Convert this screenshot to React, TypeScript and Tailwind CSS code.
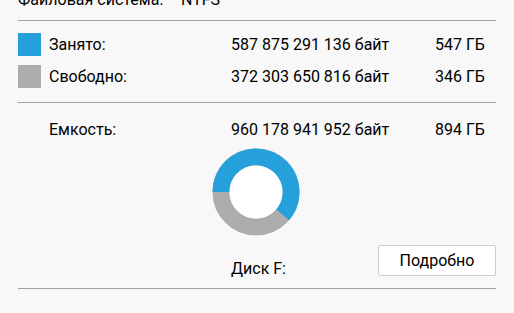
import React from 'react';

const used = 587875291136;
const total = 960178941952;

const Donut: React.FC = () => {
  const cx = 44;
  const cy = 44;
  const r = 35;
  const frac = used / total;
  const start = Math.PI; // 9 o'clock
  const end = start + frac * Math.PI * 2;
  const p = (a: number) => [cx + r * Math.cos(a), cy + r * Math.sin(a)];
  const [x1, y1] = p(start);
  const [x2, y2] = p(end);
  const large = frac > 0.5 ? 1 : 0;
  return (
    <svg width="88" height="88" viewBox="0 0 88 88">
      <circle cx={cx} cy={cy} r={r} fill="none" stroke="#adadad" strokeWidth="17" />
      <path
        d={`M ${x1} ${y1} A ${r} ${r} 0 ${large} 1 ${x2} ${y2}`}
        fill="none"
        stroke="#26a0da"
        strokeWidth="17"
      />
      <circle cx={cx} cy={cy} r="26.5" fill="#ffffff" />
    </svg>
  );
};

const App: React.FC = () => {
  return (
    <div
      className="w-[514px] h-[313px] overflow-hidden bg-[#f8f8f8] text-[16px] text-black px-[18px]"
      style={{ fontFamily: 'Roboto, "Noto Sans", sans-serif' }}
    >
      {/* File system line, cut off at the top */}
      <div className="flex h-[20px] -mt-[10px] leading-[20px]">
        <span className="w-[163px]">Файловая система:</span>
        <span>NTFS</span>
      </div>
      <div className="h-px bg-[#a0a0a0] mt-[10px]" />

      {/* Used / free */}
      <div className="grid grid-cols-[31px_182px_204px_1fr] gap-y-[9px] mt-[12px] items-center leading-[23px]">
        <div className="w-[23px] h-[23px] bg-[#26a0da]" />
        <span>Занято:</span>
        <span>587 875 291 136 байт</span>
        <span>547 ГБ</span>
        <div className="w-[23px] h-[23px] bg-[#adadad]" />
        <span>Свободно:</span>
        <span>372 303 650 816 байт</span>
        <span>346 ГБ</span>
      </div>
      <div className="h-px bg-[#a0a0a0] mt-[14px]" />

      {/* Capacity */}
      <div className="grid grid-cols-[31px_182px_204px_1fr] mt-[15px] leading-[23px]">
        <span />
        <span>Емкость:</span>
        <span>960 178 941 952 байт</span>
        <span>894 ГБ</span>
      </div>

      {/* Chart */}
      <div className="flex justify-center mt-[7px] pr-[2px]">
        <Donut />
      </div>

      {/* Footer */}
      <div className="grid grid-cols-[1fr_auto_1fr] items-start mt-[9px]">
        <span />
        <span className="mt-[14px] leading-[20px] pl-[3px]">Диск F:</span>
        <div className="flex justify-end">
          <button className="w-[118px] h-[31px] bg-white border border-[#cccccc] rounded-[2px] text-[16px] leading-none">
            Подробно
          </button>
        </div>
      </div>
      <div className="h-px bg-[#a0a0a0] mt-[9px]" />
    </div>
  );
};

export default App;
